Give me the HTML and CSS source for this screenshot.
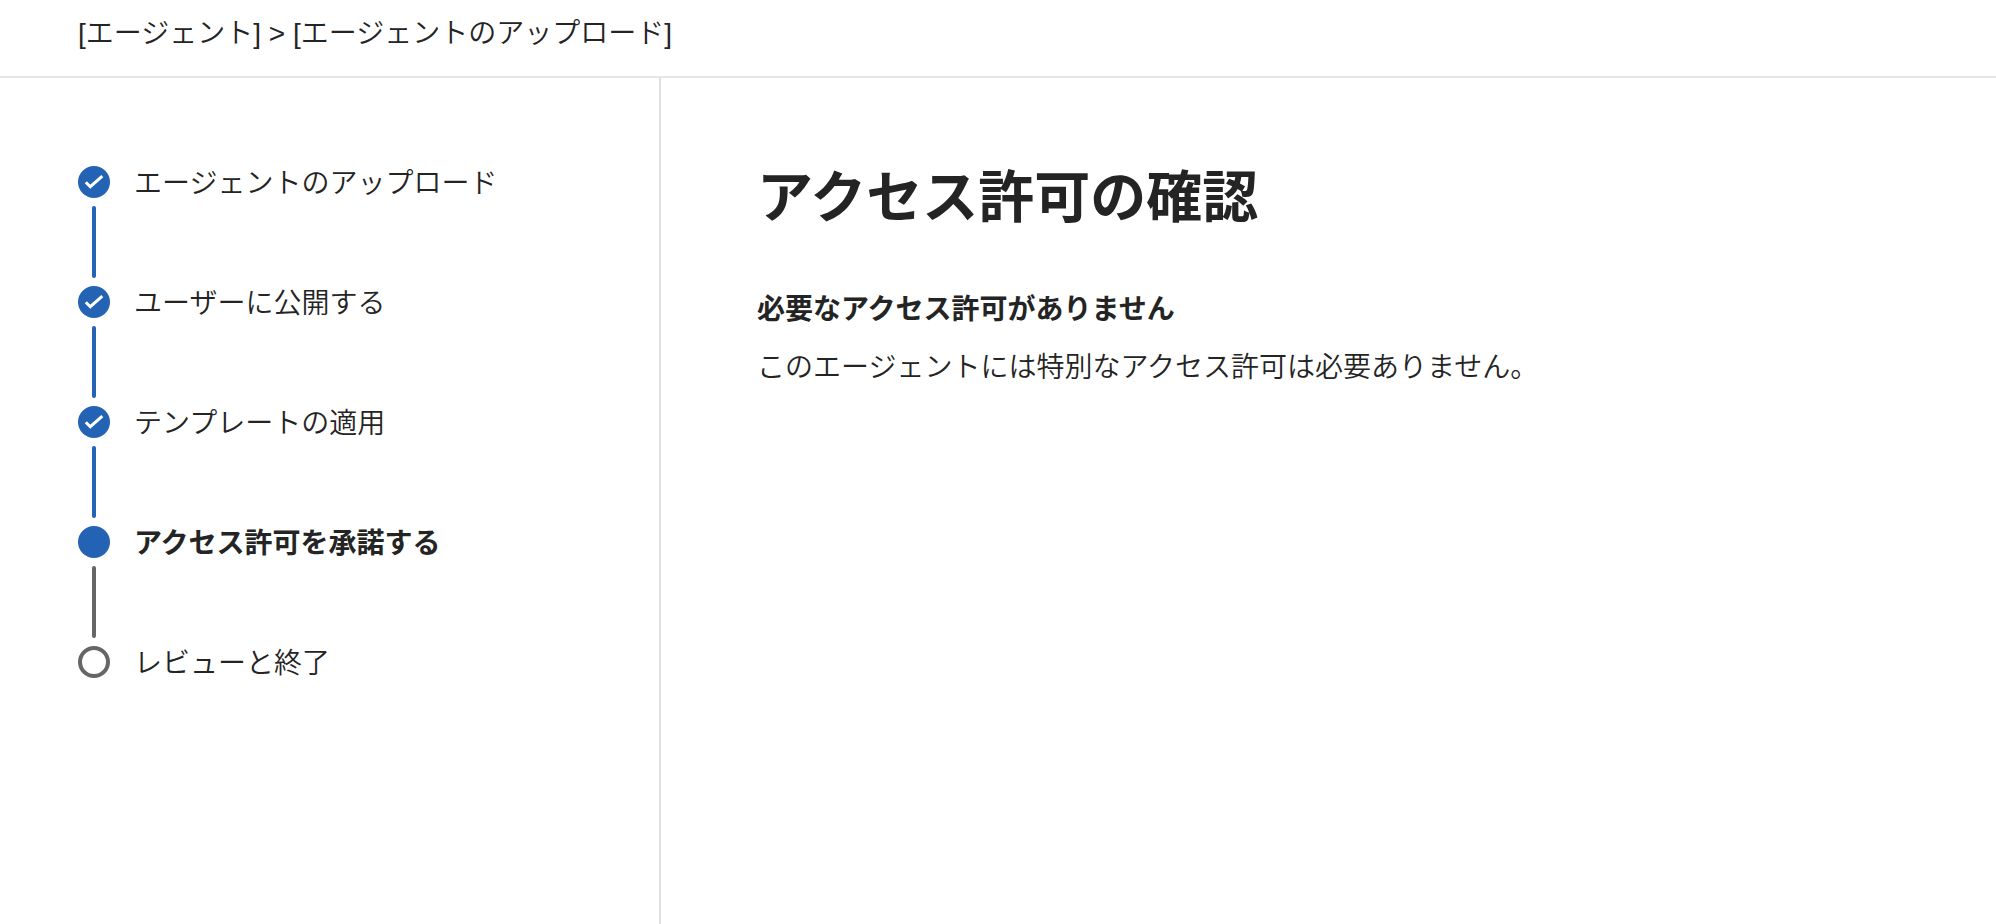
FILE: index.html
```html
<!DOCTYPE html>
<html lang="ja">
<head>
<meta charset="utf-8">
<meta name="viewport" content="width=device-width, initial-scale=1">
<title>アクセス許可の確認</title>
<link rel="stylesheet" href="styles.css">
</head>
<body>
<header class="breadcrumb">[エージェント] &gt; [エージェントのアップロード]</header>
<div class="wizard">
  <nav class="sidebar" aria-label="手順">
    <ol class="steps">
      <li class="step step-done"><span class="rail"><svg class="marker" viewBox="0 0 32 32" aria-hidden="true"><circle cx="16" cy="16" r="16" fill="#2463b3"/><path d="M7.800 16.200L12.300 20.700L24.300 10.200" fill="none" stroke="#fff" stroke-width="3"/></svg></span><span class="label">エージェントのアップロード</span></li>
      <li class="step step-done"><span class="rail"><svg class="marker" viewBox="0 0 32 32" aria-hidden="true"><circle cx="16" cy="16" r="16" fill="#2463b3"/><path d="M7.800 16.200L12.300 20.700L24.300 10.200" fill="none" stroke="#fff" stroke-width="3"/></svg></span><span class="label">ユーザーに公開する</span></li>
      <li class="step step-done"><span class="rail"><svg class="marker" viewBox="0 0 32 32" aria-hidden="true"><circle cx="16" cy="16" r="16" fill="#2463b3"/><path d="M7.800 16.200L12.300 20.700L24.300 10.200" fill="none" stroke="#fff" stroke-width="3"/></svg></span><span class="label">テンプレートの適用</span></li>
      <li class="step step-current" aria-current="step"><span class="rail"><svg class="marker" viewBox="0 0 32 32" aria-hidden="true"><circle cx="16" cy="16" r="16" fill="#2463b3"/></svg></span><span class="label">アクセス許可を承諾する</span></li>
      <li class="step"><span class="rail"><svg class="marker" viewBox="0 0 32 32" aria-hidden="true"><circle cx="16" cy="16" r="14" fill="none" stroke="#666" stroke-width="4"/></svg></span><span class="label">レビューと終了</span></li>
    </ol>
  </nav>
  <main class="content">
    <h1 class="title">アクセス許可の確認</h1>
    <h2 class="subtitle">必要なアクセス許可がありません</h2>
    <p class="description">このエージェントには特別なアクセス許可は必要ありません。</p>
  </main>
</div>
</body>
</html>
```

FILE: styles.css
```css
* {
  box-sizing: border-box;
}

body {
  display: flex;
  flex-direction: column;
  min-height: 100vh;
  margin: 0;
  background: #fff;
  color: #242424;
  font-family: "Liberation Sans", "Noto Sans CJK JP", sans-serif;
  font-size: 28px;
  font-weight: 350;
  line-height: 40px;
}

.breadcrumb {
  padding: 14px 78px 22px;
  border-bottom: 2px solid #e6e6e6;
}

.wizard {
  display: flex;
  flex: 1;
}

.sidebar {
  flex: 0 0 661px;
  padding: 86px 78px;
  border-right: 2px solid #e0e0e0;
}

.steps {
  margin: 0;
  padding: 0;
  list-style: none;
}

.step {
  display: flex;
  gap: 24px;
  height: 120px;
}

.rail {
  display: flex;
  flex-direction: column;
  align-items: center;
  gap: 8px;
  padding: 2px 0;
}

.marker {
  display: block;
  flex: none;
  width: 32px;
  height: 32px;
}

.step:not(:last-child) .rail::after {
  width: 4px;
  height: 72px;
  flex: none;
  border-radius: 2px;
  background: #666;
  content: "";
}

.step-done:not(:last-child) .rail::after {
  background: #2463b3;
}

.step-current .label {
  font-weight: 700;
}

.content {
  flex: 1;
  padding: 84px 96px;
}

.title {
  margin: 0;
  font-size: 56px;
  line-height: 72px;
}

.subtitle {
  margin: 56px 0 0;
  font-size: 28px;
}

.description {
  margin: 18px 0 0;
}
```
